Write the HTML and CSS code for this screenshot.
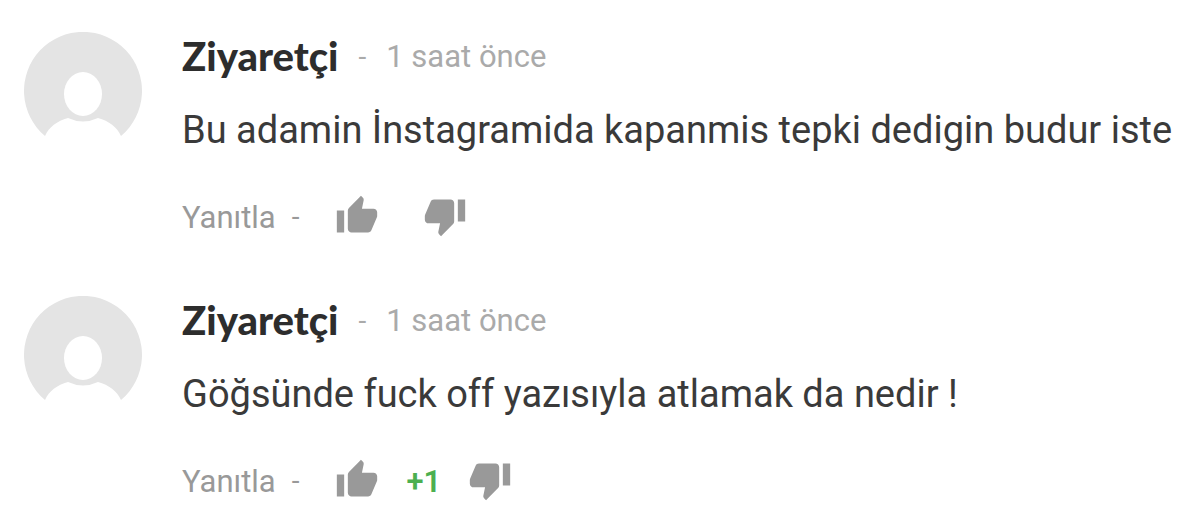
FILE: index.html
```html
<!DOCTYPE html>
<html lang="tr">
<head>
<meta charset="utf-8">
<meta name="viewport" content="width=device-width, initial-scale=1">
<title>Yorumlar</title>
<link rel="stylesheet" href="styles.css">
</head>
<body>
<svg class="defs" aria-hidden="true">
  <symbol id="thumb" viewBox="0 0 24 24"><path d="M1 21h4V9H1v12zm22-11c0-1.100-.9-2-2-2h-6.310l.95-4.570.03-.32c0-.41-.17-.79-.44-1.060L14.170 1 7.590 7.590C7.220 7.950 7 8.450 7 9v10c0 1.100.9 2 2 2h9c.83 0 1.540-.5 1.840-1.220l3.020-7.050c.09-.23.14-.47.14-.73v-2z"/></symbol>
  <symbol id="person" viewBox="0 0 118 118"><path class="disc" d="M21 104A59 59 0 1 1 97 104C93 95 85 89 74 86Q59 93 44 86C33 89 25 95 21 104Z"/><ellipse class="head" cx="59" cy="62" rx="19" ry="22"/></symbol>
</svg>
<main class="comments">
  <article class="comment">
    <svg class="avatar" aria-hidden="true"><use href="#person"/></svg>
    <div class="body">
      <header class="meta"><h2 class="author">Ziyaretçi</h2><span class="dash">-</span><time class="time">1 saat önce</time></header>
      <p class="text">Bu adamin İnstagramida kapanmis tepki dedigin budur iste</p>
      <footer class="actions">
        <button class="reply" type="button">Yanıtla</button><span class="dash">-</span>
        <button class="vote" type="button" aria-label="Beğen"><svg class="icon"><use href="#thumb"/></svg></button>
        <span class="score"></span>
        <button class="vote" type="button" aria-label="Beğenme"><svg class="icon down"><use href="#thumb"/></svg></button>
      </footer>
    </div>
  </article>
  <article class="comment">
    <svg class="avatar" aria-hidden="true"><use href="#person"/></svg>
    <div class="body">
      <header class="meta"><h2 class="author">Ziyaretçi</h2><span class="dash">-</span><time class="time">1 saat önce</time></header>
      <p class="text">Göğsünde fuck off yazısıyla atlamak da nedir !</p>
      <footer class="actions">
        <button class="reply" type="button">Yanıtla</button><span class="dash">-</span>
        <button class="vote" type="button" aria-label="Beğen"><svg class="icon"><use href="#thumb"/></svg></button>
        <span class="score">+1</span>
        <button class="vote" type="button" aria-label="Beğenme"><svg class="icon down"><use href="#thumb"/></svg></button>
      </footer>
    </div>
  </article>
</main>
</body>
</html>
```
FILE: styles.css
```css
* { box-sizing: border-box; }
body { margin: 0; background: #fff; color: #3a3a3a; font-family: Roboto, sans-serif; }
.defs { position: absolute; width: 0; height: 0; }
.comments { display: flex; flex-direction: column; gap: 48px; padding: 32px 0 0 24px; }
.comment { display: flex; gap: 40px; }
.avatar { flex: none; width: 118px; height: 118px; }
.disc { fill: #e4e4e4; }
.head { fill: #fff; }
.body { flex: 1; min-width: 0; }
.meta { display: flex; align-items: center; height: 48px; }
.author { margin: 0; color: #2d2d2d; font: 900 40px/48px Lato, sans-serif; }
.dash { color: #aaa; font-size: 28px; }
.meta .dash { margin: 0 20px; }
.time { color: #aaa; font-size: 31px; }
.text { margin: 26px 0 30px; font-size: 38px; line-height: 48px; }
.actions { display: flex; align-items: center; height: 64px; }
.actions .dash { margin: 0 36px 0 16px; color: #999; }
.reply { padding: 4px 0 0; border: 0; background: none; color: #999; font: 31px/40px Roboto, sans-serif; cursor: pointer; }
.vote { display: flex; padding: 0; border: 0; background: none; color: #999; cursor: pointer; }
.icon { width: 44px; height: 44px; fill: currentColor; }
.down { transform: rotate(180deg); }
.score { padding: 2px 27px 0; color: #4caf50; font-size: 31px; font-weight: 600; }
.score:empty { padding: 0 22px; }
```
